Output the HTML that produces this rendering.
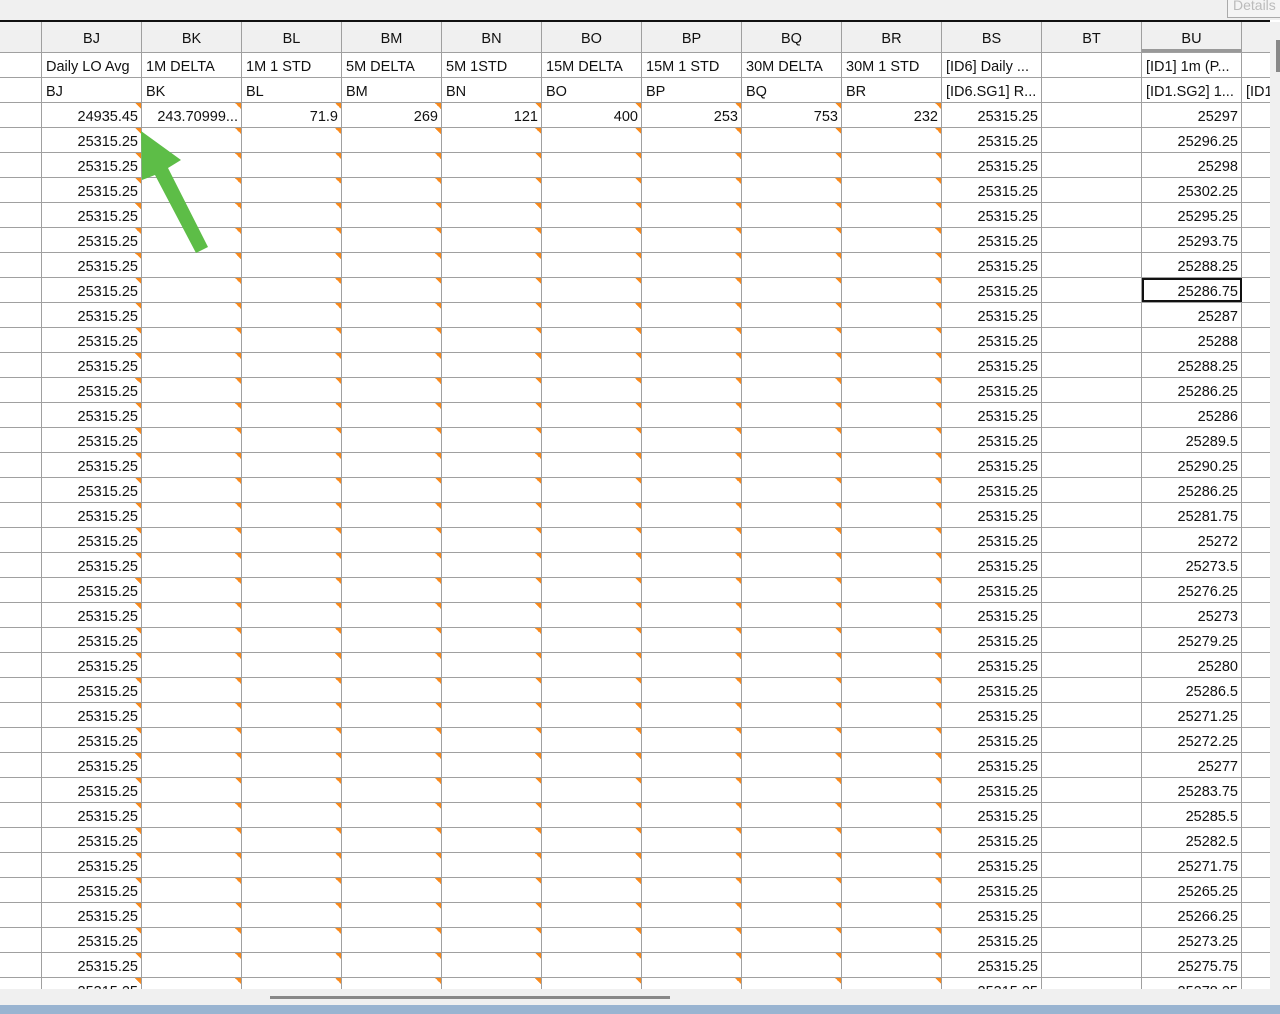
<!DOCTYPE html>
<html><head><meta charset="utf-8"><style>
*{margin:0;padding:0;box-sizing:border-box}
body{width:1280px;height:1014px;overflow:hidden;background:#fff;font-family:"Liberation Sans",sans-serif;font-size:14.5px;color:#111;position:relative}
.top{position:absolute;left:0;top:0;width:1280px;height:20px;background:#f0f0f0}
.det{position:absolute;left:1227px;top:-4px;width:60px;height:22px;border:1px solid #aaa;background:#f4f4f4;color:#bbb;padding-left:5px;font-size:14px}
.bl{position:absolute;left:0;top:20px;width:1270px;height:2px;background:#111}
.grid{position:absolute;left:0;top:22px;width:1270px;height:967px;overflow:hidden}
.r{display:flex;height:25px;border-bottom:1px solid #a0a0a0}
.r>*{display:block;flex:none;width:100px;border-right:1px solid #a0a0a0;white-space:nowrap;overflow:hidden;line-height:28px;text-align:right;padding-right:3px;font-style:normal;font-weight:normal}
.r>i{width:42px}
.r>u{width:29px;border-right:none;text-decoration:none;text-align:left;padding-left:4px}
.t{background:linear-gradient(to bottom left,#f98a1c 50%,transparent 50%) top right/6px 6px no-repeat}
.h{height:31px;background:#f0f0f0}
.h>*{text-align:center;line-height:34px;padding:0}
.l>*{text-align:left;padding-left:4px}
.sel{outline:2px solid #111;outline-offset:-2px}
.hb{position:absolute;left:0;top:989px;width:1280px;height:16px;background:#f0f0f0}
.thumb{position:absolute;left:270px;top:996px;width:400px;height:3px;background:#888}
.task{position:absolute;left:0;top:1005px;width:1280px;height:9px;background:#99b4d1}
.vs{position:absolute;left:1270px;top:22px;width:10px;height:983px;background:#f0f0f0}
.vt{position:absolute;left:1276px;top:40px;width:4px;height:32px;background:#888}
</style></head><body>
<div class="top"></div><div class="det">Details</div><div class="bl"></div>
<div class="grid">
<div class="r h"><i></i><b>BJ</b><b>BK</b><b>BL</b><b>BM</b><b>BN</b><b>BO</b><b>BP</b><b>BQ</b><b>BR</b><b>BS</b><b>BT</b><b style="border-bottom:3px solid #999">BU</b><u></u></div>
<div class="r l"><i></i><b>Daily LO Avg</b><b>1M DELTA</b><b>1M 1 STD</b><b>5M DELTA</b><b>5M 1STD</b><b>15M DELTA</b><b>15M 1 STD</b><b>30M DELTA</b><b>30M 1 STD</b><b>[ID6] Daily ...</b><b></b><b>[ID1] 1m (P...</b><u></u></div>
<div class="r l"><i></i><b>BJ</b><b>BK</b><b>BL</b><b>BM</b><b>BN</b><b>BO</b><b>BP</b><b>BQ</b><b>BR</b><b>[ID6.SG1] R...</b><b></b><b>[ID1.SG2] 1...</b><u>[ID1</u></div>
<div class="r"><i></i><b class="t">24935.45</b><b class="t">243.70999...</b><b class="t">71.9</b><b class="t">269</b><b class="t">121</b><b class="t">400</b><b class="t">253</b><b class="t">753</b><b class="t">232</b><b>25315.25</b><b></b><b>25297</b><u></u></div>
<div class="r"><i></i><b class="t">25315.25</b><b class="t"></b><b class="t"></b><b class="t"></b><b class="t"></b><b class="t"></b><b class="t"></b><b class="t"></b><b class="t"></b><b>25315.25</b><b></b><b>25296.25</b><u></u></div>
<div class="r"><i></i><b class="t">25315.25</b><b class="t"></b><b class="t"></b><b class="t"></b><b class="t"></b><b class="t"></b><b class="t"></b><b class="t"></b><b class="t"></b><b>25315.25</b><b></b><b>25298</b><u></u></div>
<div class="r"><i></i><b class="t">25315.25</b><b class="t"></b><b class="t"></b><b class="t"></b><b class="t"></b><b class="t"></b><b class="t"></b><b class="t"></b><b class="t"></b><b>25315.25</b><b></b><b>25302.25</b><u></u></div>
<div class="r"><i></i><b class="t">25315.25</b><b class="t"></b><b class="t"></b><b class="t"></b><b class="t"></b><b class="t"></b><b class="t"></b><b class="t"></b><b class="t"></b><b>25315.25</b><b></b><b>25295.25</b><u></u></div>
<div class="r"><i></i><b class="t">25315.25</b><b class="t"></b><b class="t"></b><b class="t"></b><b class="t"></b><b class="t"></b><b class="t"></b><b class="t"></b><b class="t"></b><b>25315.25</b><b></b><b>25293.75</b><u></u></div>
<div class="r"><i></i><b class="t">25315.25</b><b class="t"></b><b class="t"></b><b class="t"></b><b class="t"></b><b class="t"></b><b class="t"></b><b class="t"></b><b class="t"></b><b>25315.25</b><b></b><b>25288.25</b><u></u></div>
<div class="r"><i></i><b class="t">25315.25</b><b class="t"></b><b class="t"></b><b class="t"></b><b class="t"></b><b class="t"></b><b class="t"></b><b class="t"></b><b class="t"></b><b>25315.25</b><b></b><b class="sel">25286.75</b><u></u></div>
<div class="r"><i></i><b class="t">25315.25</b><b class="t"></b><b class="t"></b><b class="t"></b><b class="t"></b><b class="t"></b><b class="t"></b><b class="t"></b><b class="t"></b><b>25315.25</b><b></b><b>25287</b><u></u></div>
<div class="r"><i></i><b class="t">25315.25</b><b class="t"></b><b class="t"></b><b class="t"></b><b class="t"></b><b class="t"></b><b class="t"></b><b class="t"></b><b class="t"></b><b>25315.25</b><b></b><b>25288</b><u></u></div>
<div class="r"><i></i><b class="t">25315.25</b><b class="t"></b><b class="t"></b><b class="t"></b><b class="t"></b><b class="t"></b><b class="t"></b><b class="t"></b><b class="t"></b><b>25315.25</b><b></b><b>25288.25</b><u></u></div>
<div class="r"><i></i><b class="t">25315.25</b><b class="t"></b><b class="t"></b><b class="t"></b><b class="t"></b><b class="t"></b><b class="t"></b><b class="t"></b><b class="t"></b><b>25315.25</b><b></b><b>25286.25</b><u></u></div>
<div class="r"><i></i><b class="t">25315.25</b><b class="t"></b><b class="t"></b><b class="t"></b><b class="t"></b><b class="t"></b><b class="t"></b><b class="t"></b><b class="t"></b><b>25315.25</b><b></b><b>25286</b><u></u></div>
<div class="r"><i></i><b class="t">25315.25</b><b class="t"></b><b class="t"></b><b class="t"></b><b class="t"></b><b class="t"></b><b class="t"></b><b class="t"></b><b class="t"></b><b>25315.25</b><b></b><b>25289.5</b><u></u></div>
<div class="r"><i></i><b class="t">25315.25</b><b class="t"></b><b class="t"></b><b class="t"></b><b class="t"></b><b class="t"></b><b class="t"></b><b class="t"></b><b class="t"></b><b>25315.25</b><b></b><b>25290.25</b><u></u></div>
<div class="r"><i></i><b class="t">25315.25</b><b class="t"></b><b class="t"></b><b class="t"></b><b class="t"></b><b class="t"></b><b class="t"></b><b class="t"></b><b class="t"></b><b>25315.25</b><b></b><b>25286.25</b><u></u></div>
<div class="r"><i></i><b class="t">25315.25</b><b class="t"></b><b class="t"></b><b class="t"></b><b class="t"></b><b class="t"></b><b class="t"></b><b class="t"></b><b class="t"></b><b>25315.25</b><b></b><b>25281.75</b><u></u></div>
<div class="r"><i></i><b class="t">25315.25</b><b class="t"></b><b class="t"></b><b class="t"></b><b class="t"></b><b class="t"></b><b class="t"></b><b class="t"></b><b class="t"></b><b>25315.25</b><b></b><b>25272</b><u></u></div>
<div class="r"><i></i><b class="t">25315.25</b><b class="t"></b><b class="t"></b><b class="t"></b><b class="t"></b><b class="t"></b><b class="t"></b><b class="t"></b><b class="t"></b><b>25315.25</b><b></b><b>25273.5</b><u></u></div>
<div class="r"><i></i><b class="t">25315.25</b><b class="t"></b><b class="t"></b><b class="t"></b><b class="t"></b><b class="t"></b><b class="t"></b><b class="t"></b><b class="t"></b><b>25315.25</b><b></b><b>25276.25</b><u></u></div>
<div class="r"><i></i><b class="t">25315.25</b><b class="t"></b><b class="t"></b><b class="t"></b><b class="t"></b><b class="t"></b><b class="t"></b><b class="t"></b><b class="t"></b><b>25315.25</b><b></b><b>25273</b><u></u></div>
<div class="r"><i></i><b class="t">25315.25</b><b class="t"></b><b class="t"></b><b class="t"></b><b class="t"></b><b class="t"></b><b class="t"></b><b class="t"></b><b class="t"></b><b>25315.25</b><b></b><b>25279.25</b><u></u></div>
<div class="r"><i></i><b class="t">25315.25</b><b class="t"></b><b class="t"></b><b class="t"></b><b class="t"></b><b class="t"></b><b class="t"></b><b class="t"></b><b class="t"></b><b>25315.25</b><b></b><b>25280</b><u></u></div>
<div class="r"><i></i><b class="t">25315.25</b><b class="t"></b><b class="t"></b><b class="t"></b><b class="t"></b><b class="t"></b><b class="t"></b><b class="t"></b><b class="t"></b><b>25315.25</b><b></b><b>25286.5</b><u></u></div>
<div class="r"><i></i><b class="t">25315.25</b><b class="t"></b><b class="t"></b><b class="t"></b><b class="t"></b><b class="t"></b><b class="t"></b><b class="t"></b><b class="t"></b><b>25315.25</b><b></b><b>25271.25</b><u></u></div>
<div class="r"><i></i><b class="t">25315.25</b><b class="t"></b><b class="t"></b><b class="t"></b><b class="t"></b><b class="t"></b><b class="t"></b><b class="t"></b><b class="t"></b><b>25315.25</b><b></b><b>25272.25</b><u></u></div>
<div class="r"><i></i><b class="t">25315.25</b><b class="t"></b><b class="t"></b><b class="t"></b><b class="t"></b><b class="t"></b><b class="t"></b><b class="t"></b><b class="t"></b><b>25315.25</b><b></b><b>25277</b><u></u></div>
<div class="r"><i></i><b class="t">25315.25</b><b class="t"></b><b class="t"></b><b class="t"></b><b class="t"></b><b class="t"></b><b class="t"></b><b class="t"></b><b class="t"></b><b>25315.25</b><b></b><b>25283.75</b><u></u></div>
<div class="r"><i></i><b class="t">25315.25</b><b class="t"></b><b class="t"></b><b class="t"></b><b class="t"></b><b class="t"></b><b class="t"></b><b class="t"></b><b class="t"></b><b>25315.25</b><b></b><b>25285.5</b><u></u></div>
<div class="r"><i></i><b class="t">25315.25</b><b class="t"></b><b class="t"></b><b class="t"></b><b class="t"></b><b class="t"></b><b class="t"></b><b class="t"></b><b class="t"></b><b>25315.25</b><b></b><b>25282.5</b><u></u></div>
<div class="r"><i></i><b class="t">25315.25</b><b class="t"></b><b class="t"></b><b class="t"></b><b class="t"></b><b class="t"></b><b class="t"></b><b class="t"></b><b class="t"></b><b>25315.25</b><b></b><b>25271.75</b><u></u></div>
<div class="r"><i></i><b class="t">25315.25</b><b class="t"></b><b class="t"></b><b class="t"></b><b class="t"></b><b class="t"></b><b class="t"></b><b class="t"></b><b class="t"></b><b>25315.25</b><b></b><b>25265.25</b><u></u></div>
<div class="r"><i></i><b class="t">25315.25</b><b class="t"></b><b class="t"></b><b class="t"></b><b class="t"></b><b class="t"></b><b class="t"></b><b class="t"></b><b class="t"></b><b>25315.25</b><b></b><b>25266.25</b><u></u></div>
<div class="r"><i></i><b class="t">25315.25</b><b class="t"></b><b class="t"></b><b class="t"></b><b class="t"></b><b class="t"></b><b class="t"></b><b class="t"></b><b class="t"></b><b>25315.25</b><b></b><b>25273.25</b><u></u></div>
<div class="r"><i></i><b class="t">25315.25</b><b class="t"></b><b class="t"></b><b class="t"></b><b class="t"></b><b class="t"></b><b class="t"></b><b class="t"></b><b class="t"></b><b>25315.25</b><b></b><b>25275.75</b><u></u></div>
<div class="r"><i></i><b class="t">25315.25</b><b class="t"></b><b class="t"></b><b class="t"></b><b class="t"></b><b class="t"></b><b class="t"></b><b class="t"></b><b class="t"></b><b>25315.25</b><b></b><b>25278.25</b><u></u></div>
</div>
<svg style="position:absolute;left:0;top:0" width="1280" height="1014"><polygon points="141,131 181,160 168,168 208,247 196,253 155,175 142,180" fill="#5dbd47"/></svg>
<div class="hb"></div><div class="thumb"></div><div class="task"></div>
<div class="vs"></div><div class="vt"></div>
</body></html>
